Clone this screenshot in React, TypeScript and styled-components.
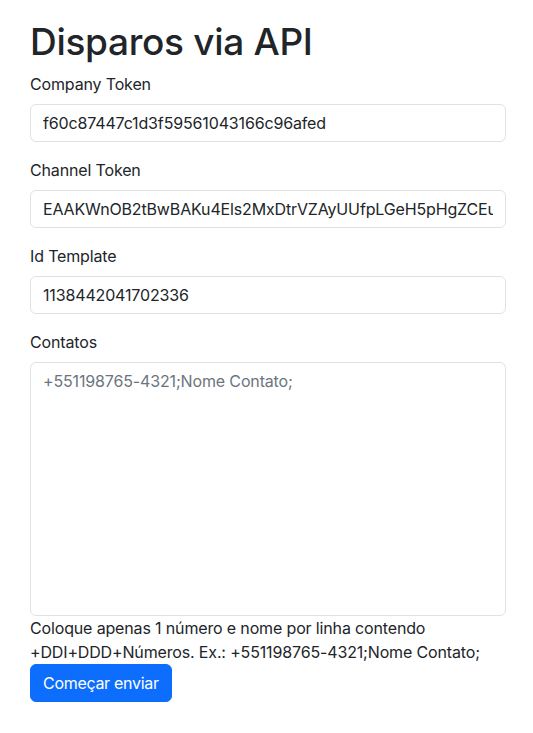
import styled, { createGlobalStyle } from "styled-components";

const GlobalStyle = createGlobalStyle`
  * { box-sizing: border-box; }
  body {
    margin: 0;
    background: #fff;
    color: #212529;
    font-family: Inter, "Helvetica Neue", Arial, sans-serif;
    font-size: 16px;
    line-height: 1.5;
    letter-spacing: -0.15px;
  }
`;

const Page = styled.div`
  padding: 20px 27px 24px 30px;
`;

const Title = styled.h1`
  margin: 0 0 8px;
  font-size: 37px;
  font-weight: 500;
  line-height: 1.2;
  letter-spacing: -0.3px;
`;

const Field = styled.div<{ $last?: boolean }>`
  margin-bottom: ${(p) => (p.$last ? "0" : "16px")};
`;

const Label = styled.label`
  display: block;
  margin-bottom: 8px;
`;

const Input = styled.input`
  display: block;
  width: 100%;
  height: 38px;
  padding: 6px 12px;
  font: inherit;
  letter-spacing: inherit;
  color: #212529;
  background: #fff;
  border: 1px solid #dee2e6;
  border-radius: 6px;
  outline: none;
`;

const TextArea = styled.textarea`
  display: block;
  width: 100%;
  height: 254px;
  padding: 6px 12px;
  font: inherit;
  letter-spacing: inherit;
  color: #212529;
  border: 1px solid #dee2e6;
  border-radius: 6px;
  resize: none;
  outline: none;
  &::placeholder {
    color: #6c757d;
  }
`;

const Help = styled.div`
  margin: 0;
`;

const Button = styled.button`
  display: inline-block;
  height: 38px;
  padding: 6px 12px;
  font: inherit;
  letter-spacing: -0.3px;
  color: #fff;
  background: #0d6efd;
  border: 1px solid #0d6efd;
  border-radius: 6px;
  cursor: pointer;
`;

export default function App() {
  return (
    <>
      <GlobalStyle />
      <Page>
        <Title>Disparos via API</Title>
        <Field>
          <Label>Company Token</Label>
          <Input defaultValue="f60c87447c1d3f59561043166c96afed" />
        </Field>
        <Field>
          <Label>Channel Token</Label>
          <Input defaultValue="EAAKWnOB2tBwBAKu4Els2MxDtrVZAyUUfpLGeH5pHgZCEutQ8ZBkZA3mXvZCk" />
        </Field>
        <Field>
          <Label>Id Template</Label>
          <Input defaultValue="1138442041702336" />
        </Field>
        <Field $last>
          <Label>Contatos</Label>
          <TextArea placeholder="+551198765-4321;Nome Contato;" />
          <Help>
            Coloque apenas 1 número e nome por linha contendo +DDI+DDD+Números. Ex.: +551198765-4321;Nome Contato;
          </Help>
        </Field>
        <Button>Começar enviar</Button>
      </Page>
    </>
  );
}
